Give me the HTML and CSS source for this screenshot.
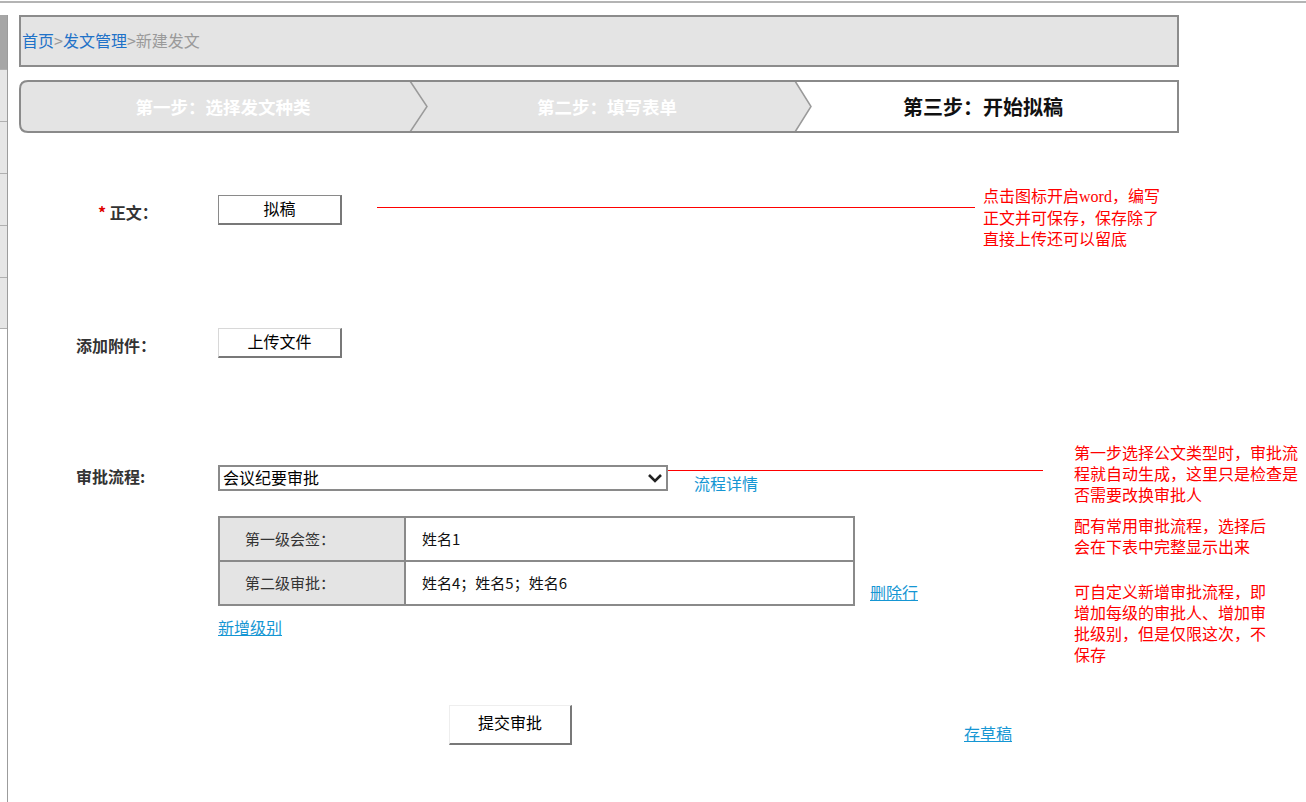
FILE: index.html
```html
<!DOCTYPE html>
<html lang="zh-CN">
<head>
<meta charset="utf-8">
<title>新建发文</title>
<link rel="stylesheet" href="styles.css">
</head>
<body>
<div class="topbar"></div>
<div class="page">
  <aside class="side">
    <div class="side-head"></div>
    <div class="side-item"></div>
    <div class="side-item"></div>
    <div class="side-item"></div>
    <div class="side-item"></div>
    <div class="side-item"></div>
  </aside>
  <main class="main">
    <div class="crumb"><a class="crumb-link" href="#">首页</a><span class="crumb-sep">&gt;</span><a class="crumb-link" href="#">发文管理</a><span class="crumb-sep">&gt;</span><span class="crumb-cur">新建发文</span></div>

    <div class="steps">
      <svg class="steps-bg" width="1160" height="53" viewBox="0 0 1160 53">
        <path d="M9,1 H1159 V52 H9 Q1,52 1,44 V9 Q1,1 9,1 Z" fill="#ffffff"/>
        <path d="M9,1 H391 L408,26.5 L391,52 H9 Q1,52 1,44 V9 Q1,1 9,1 Z" fill="#e4e4e4"/>
        <path d="M391,1 H776 L792,26.5 L776,52 H391 L408,26.5 Z" fill="#e4e4e4"/>
        <polyline points="391,1 408,26.5 391,52" fill="none" stroke="#9a9a9a" stroke-width="1.5"/>
        <polyline points="776,1 792,26.5 776,52" fill="none" stroke="#9a9a9a" stroke-width="1.5"/>
        <path d="M9,1 H1159 V52 H9 Q1,52 1,44 V9 Q1,1 9,1 Z" fill="none" stroke="#8a8a8a" stroke-width="2"/>
      </svg>
      <div class="step step-1">第一步：选择发文种类</div>
      <div class="step step-2">第二步：填写表单</div>
      <div class="step step-3">第三步：开始拟稿</div>
    </div>

    <div class="form">
      <div class="row row-body">
        <div class="label label-req"><span class="req">*</span> 正文：</div>
        <button class="btn btn-dark" type="button">拟稿</button>
        <div class="pointer pointer-1"></div>
        <div class="note note-1">点击图标开启<span class="word">word</span>，编写<br>正文并可保存，保存除了<br>直接上传还可以留底</div>
      </div>

      <div class="row row-attach">
        <div class="label">添加附件：</div>
        <button class="btn" type="button">上传文件</button>
      </div>

      <div class="approve">
        <div class="label label-flow">审批流程:</div>
        <div class="flow">
          <div class="flow-select-row">
            <span class="select-wrap">
              <select class="select">
                <option>会议纪要审批</option>
              </select>
              <svg class="select-arrow" width="16" height="10" viewBox="0 0 16 10"><polyline points="2,2 8,8 14,2" fill="none" stroke="#222" stroke-width="2.6"/></svg>
            </span>
            <div class="detail"><a class="link link-plain" href="#">流程详情</a></div>
          </div>
          <div class="flow-table-row">
            <table class="levels">
              <tr><td class="lv-name">第一级会签：</td><td class="lv-who">姓名1</td></tr>
              <tr><td class="lv-name">第二级审批：</td><td class="lv-who">姓名4；姓名5；姓名6</td></tr>
            </table>
            <a class="link link-del" href="#">删除行</a>
          </div>
          <a class="link link-add" href="#">新增级别</a>
        </div>
        <div class="notes">
          <p class="note note-g1">第一步选择公文类型时，审批流<br>程就自动生成，这里只是检查是<br>否需要改换审批人</p>
          <p class="note note-g2">配有常用审批流程，选择后<br>会在下表中完整显示出来</p>
          <p class="note note-g3">可自定义新增审批流程，即<br>增加每级的审批人、增加审<br>批级别，但是仅限这次，不<br>保存</p>
        </div>
      </div>

      <div class="row row-submit">
        <button class="btn btn-submit" type="button">提交审批</button>
        <a class="link link-draft" href="#">存草稿</a>
      </div>
    </div>
  </main>
</div>
</body>
</html>
```
FILE: styles.css
```css
* { box-sizing: border-box; }

html, body {
  margin: 0;
  padding: 0;
  background: #ffffff;
  overflow: hidden;
}

body {
  width: 1306px;
  height: 802px;
  font-family: "Noto Sans CJK SC", "Noto Sans", sans-serif;
  font-size: 16px;
  color: #000;
}

.topbar {
  height: 3px;
  border-top: 1px solid #ffffff;
  border-bottom: 2px solid #b4b4b4;
}

.page {
  display: flex;
  height: 799px;
}

.side {
  width: 8px;
  margin-top: 12px;
  border-right: 1px solid #9c9c9c;
  display: flex;
  flex-direction: column;
}

.side-head {
  height: 54px;
  background: #a6a6a6;
}

.side-item {
  height: 52px;
  background: #e6e6e6;
  border-top: 1px solid #b0b0b0;
}

.side-item:last-child {
  border-bottom: 1px solid #b0b0b0;
}

.main {
  margin-left: 11px;
  padding-top: 12px;
  flex: 1;
}

/* breadcrumb */
.crumb {
  width: 1160px;
  height: 52px;
  background: #e4e4e4;
  border: 2px solid #8c8c8c;
  padding-left: 1px;
  padding-bottom: 2px;
  display: flex;
  align-items: center;
  font-size: 16px;
  line-height: 20px;
}

.crumb-link {
  color: #1f72c8;
  text-decoration: none;
}

.crumb-sep,
.crumb-cur {
  color: #9a9a9a;
}

/* steps */
.steps {
  position: relative;
  width: 1160px;
  height: 53px;
  margin-top: 13px;
  display: flex;
  align-items: center;
}

.steps-bg {
  position: absolute;
  left: 0;
  top: 0;
}

.step {
  position: relative;
  text-align: center;
  font-weight: 700;
  line-height: 24px;
}

.step-1 {
  width: 408px;
  color: #ffffff;
  font-size: 17.5px;
}

.step-2 {
  width: 360px;
  color: #ffffff;
  font-size: 17.5px;
}

.step-3 {
  width: 392px;
  color: #111111;
  font-size: 20px;
}

/* form */
.form {
  padding-left: 57px;
}

.row {
  display: flex;
  align-items: flex-start;
}

.label {
  width: 142px;
  flex: none;
  font-weight: 700;
  font-size: 16px;
  color: #333333;
}

.label-req {
  padding-left: 22px;
}

.req {
  color: #e00000;
}

.row-body {
  margin-top: 62px;
  height: 30px;
}

.row-body .label {
  line-height: 30px;
  padding-top: 2px;
}

.btn {
  width: 124px;
  height: 30px;
  flex: none;
  background: #ffffff;
  border-style: solid;
  border-color: #d8d8d8 #787878 #787878 #d8d8d8;
  border-width: 1px 2px 2px 1px;
  font-family: "Noto Sans CJK SC", "Noto Sans", sans-serif;
  font-size: 16px;
  line-height: 22px;
  color: #000;
  padding: 0 0 3px 0;
}

.btn-dark {
  border-color: #8a8a8a #787878 #787878 #8a8a8a;
}

.pointer {
  height: 1px;
  background: #ff0000;
}

.pointer-1 {
  width: 598px;
  margin-left: 35px;
  margin-top: 12px;
}

.note {
  margin: 0;
  color: #ff0000;
  font-size: 16px;
  line-height: 21px;
  white-space: nowrap;
}

.note-1 {
  margin-left: 8px;
  margin-top: -10px;
}

.word {
  font-family: "Liberation Serif", serif;
}

.row-attach {
  margin-top: 103px;
  height: 30px;
}

.row-attach .label {
  line-height: 30px;
  padding-top: 2px;
}

/* approval */
.approve {
  display: flex;
  align-items: flex-start;
  margin-top: 82px;
}

.label-flow {
  padding-top: 25px;
  line-height: 22px;
}

.flow {
  width: 825px;
  flex: none;
  padding-top: 25px;
}

.flow-select-row {
  display: flex;
  align-items: flex-start;
}

.select-wrap {
  position: relative;
  display: block;
  width: 450px;
  height: 26px;
  flex: none;
}

.select {
  appearance: none;
  -webkit-appearance: none;
  width: 450px;
  height: 26px;
  border: 2px solid #8a8a8a;
  background: #ffffff;
  padding: 0 0 2px 3px;
  font-family: "Noto Sans CJK SC", "Noto Sans", sans-serif;
  font-size: 16px;
  line-height: 20px;
  color: #000;
  border-radius: 0;
}

.select-arrow {
  position: absolute;
  right: 5px;
  top: 8px;
}

.detail {
  flex: 1;
  margin-top: 5px;
  border-top: 1px solid #ff0000;
}

.link {
  color: #1596d3;
  font-size: 16px;
  line-height: 20px;
}

.link-plain {
  display: inline-block;
  margin-left: 26px;
  margin-top: 1px;
  text-decoration: none;
}

.flow-table-row {
  display: flex;
  align-items: flex-end;
  margin-top: 21px;
}

.levels {
  width: 637px;
  border-collapse: collapse;
  border: 2px solid #8a8a8a;
}

.levels td {
  height: 44px;
  border: 2px solid #8a8a8a;
  padding: 0 0 2px 0;
  font-size: 15px;
  color: #333333;
}

.lv-name {
  width: 186px;
  background: #e4e4e4;
  padding-left: 25px !important;
}

.lv-who {
  padding-left: 16px !important;
  color: #111111 !important;
}

.link-del {
  margin-left: 15px;
  margin-bottom: 4px;
}

.link-add {
  display: inline-block;
  margin-top: 11px;
}

.notes {
  margin-left: 31px;
  padding-top: 2px;
}

.note-g1 {
  margin-bottom: 10px;
}

.note-g2 {
  margin-bottom: 24px;
}

/* submit */
.row-submit {
  margin-top: 40px;
  padding-left: 373px;
  align-items: flex-end;
}

.btn-submit {
  width: 123px;
  height: 40px;
  padding-bottom: 6px;
  border-color: #eeeeee #787878 #787878 #eeeeee;
}

.link-draft {
  margin-left: 392px;
  margin-bottom: 2px;
}
```
